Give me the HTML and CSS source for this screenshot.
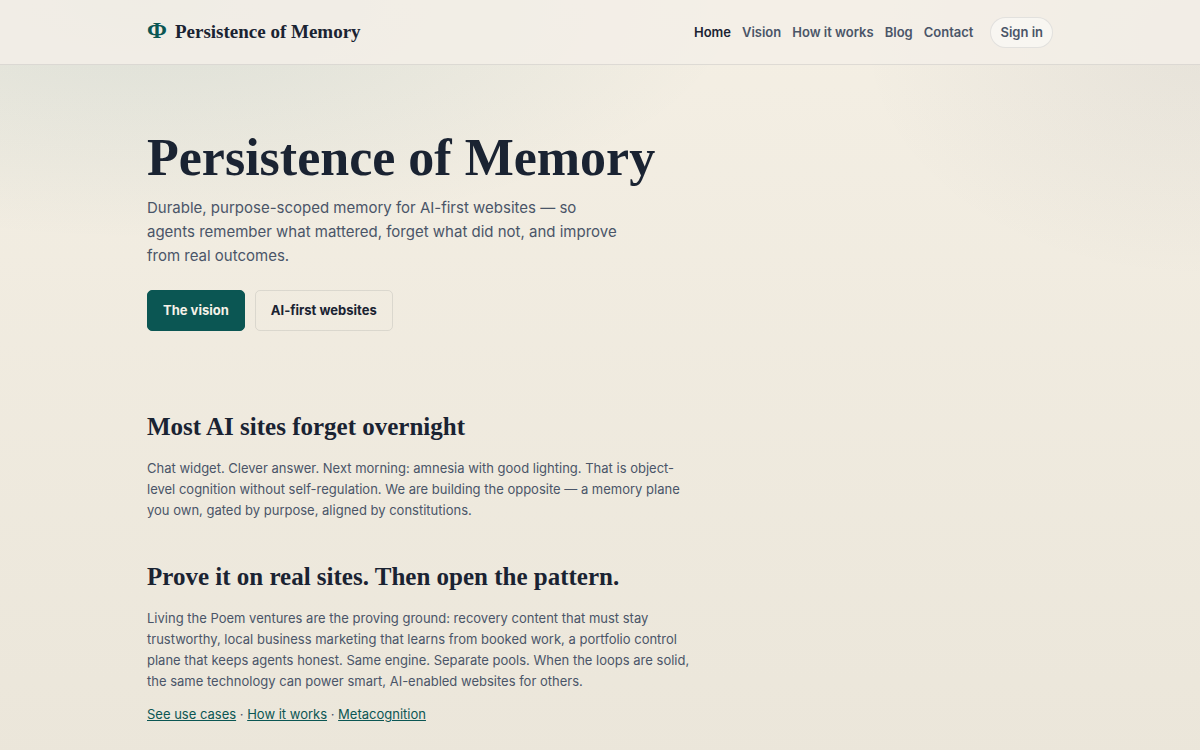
FILE: index.html
```html
<!DOCTYPE html>
<html lang="en">
<head>
<meta charset="UTF-8">
<meta name="viewport" content="width=device-width, initial-scale=1">
<title>Persistence of Memory</title>
<link rel="stylesheet" href="styles.css">
</head>
<body>

<header class="site-header">
  <div class="wrap header-inner">
    <a class="brand" href="#"><span class="brand-mark" aria-hidden="true">Φ</span><span>Persistence of Memory</span></a>
    <nav class="nav" aria-label="Main">
      <a class="active" href="#" aria-current="page">Home</a>
      <a href="#">Vision</a>
      <a href="#">How it works</a>
      <a href="#">Blog</a>
      <a href="#">Contact</a>
      <a class="sign-in" href="#">Sign in</a>
    </nav>
  </div>
</header>

<main class="wrap">
  <section class="hero">
    <h1>Persistence of Memory</h1>
    <p class="lead">Durable, purpose-scoped memory for AI-first websites — so agents remember what mattered, forget what did not, and improve from real outcomes.</p>
    <div class="actions">
      <a class="btn btn-primary" href="#">The vision</a>
      <a class="btn" href="#">AI-first websites</a>
    </div>
  </section>

  <section class="block">
    <h2>Most AI sites forget overnight</h2>
    <p>Chat widget. Clever answer. Next morning: amnesia with good lighting. That is object-level cognition without self-regulation. We are building the opposite — a memory plane you own, gated by purpose, aligned by constitutions.</p>
  </section>

  <section class="block">
    <h2>Prove it on real sites. Then open the pattern.</h2>
    <p>Living the Poem ventures are the proving ground: recovery content that must stay trustworthy, local business marketing that learns from booked work, a portfolio control plane that keeps agents honest. Same engine. Separate pools. When the loops are solid, the same technology can power smart, AI-enabled websites for others.</p>
    <p><a href="#">See use cases</a> · <a href="#">How it works</a> · <a href="#">Metacognition</a></p>
  </section>
</main>

</body>
</html>
```
FILE: styles.css
```css
:root {
  --ink: #1a2332;
  --muted: #4a5568;
  --teal: #0b5653;
  --line: rgba(26, 35, 50, 0.1);
  --serif: Georgia, "Liberation Serif", serif;
  --sans: Inter, sans-serif;
}
* {
  box-sizing: border-box;
}
body {
  margin: 0;
  min-height: 100vh;
  font-family: var(--sans);
  font-size: 13px;
  line-height: 21px;
  color: var(--ink);
  background:
    radial-gradient(ellipse 600px 240px at 12% 0, rgba(11, 86, 100, 0.1), transparent),
    radial-gradient(ellipse 340px 240px at 100% 5%, rgba(60, 70, 90, 0.07), transparent),
    linear-gradient(180deg, #f4efe4, #ebe6da);
}
.wrap {
  max-width: 954px;
  margin: 0 auto;
  padding: 0 24px;
}

/* header */
.site-header {
  background: rgba(243, 238, 232, 0.85);
  border-bottom: 1px solid var(--line);
}
.header-inner {
  display: flex;
  align-items: center;
  justify-content: space-between;
  padding-top: 16px;
  padding-bottom: 16px;
}
.brand {
  display: flex;
  align-items: center;
  gap: 8px;
  font-family: var(--serif);
  font-size: 19px;
  line-height: 32px;
  font-weight: 700;
  color: var(--ink);
  text-decoration: none;
}
.brand-mark {
  padding-bottom: 4px;
  font-size: 24px;
  line-height: 28px;
  color: var(--teal);
}
.nav {
  display: flex;
  align-items: center;
  gap: 11px;
}
.nav a {
  font-weight: 600;
  font-size: 13px;
  color: var(--muted);
  text-decoration: none;
}
.nav .active {
  color: var(--ink);
}
.nav .sign-in {
  margin-left: 6px;
  padding: 4px 9px;
  border: 1px solid var(--line);
  border-radius: 999px;
  background: rgba(255, 255, 255, 0.45);
}

/* hero */
.hero {
  padding: 67px 0 80px;
}
h1,
h2 {
  margin: 0;
  font-family: var(--serif);
  font-weight: 700;
}
h1 {
  font-size: 52px;
  line-height: 52px;
}
.lead {
  max-width: 480px;
  margin: 12px 0 22px;
  font-size: 15px;
  line-height: 24px;
  color: var(--muted);
}
.actions {
  display: flex;
  flex-wrap: wrap;
  gap: 10px;
}
.btn {
  padding: 9px 15px;
  border: 1px solid var(--line);
  border-radius: 5px;
  font-weight: 700;
  color: var(--ink);
  text-decoration: none;
}
.btn-primary {
  border-color: var(--teal);
  background: var(--teal);
  color: #f6f2e8;
}

/* text sections */
.block {
  max-width: 552px;
  padding-bottom: 40px;
}
h2 {
  font-size: 25px;
  line-height: 32px;
}
.block p {
  margin: 15px 0 0;
  color: var(--muted);
}
.block p + p {
  margin-top: 12px;
}
.block p a {
  color: var(--teal);
}
```
